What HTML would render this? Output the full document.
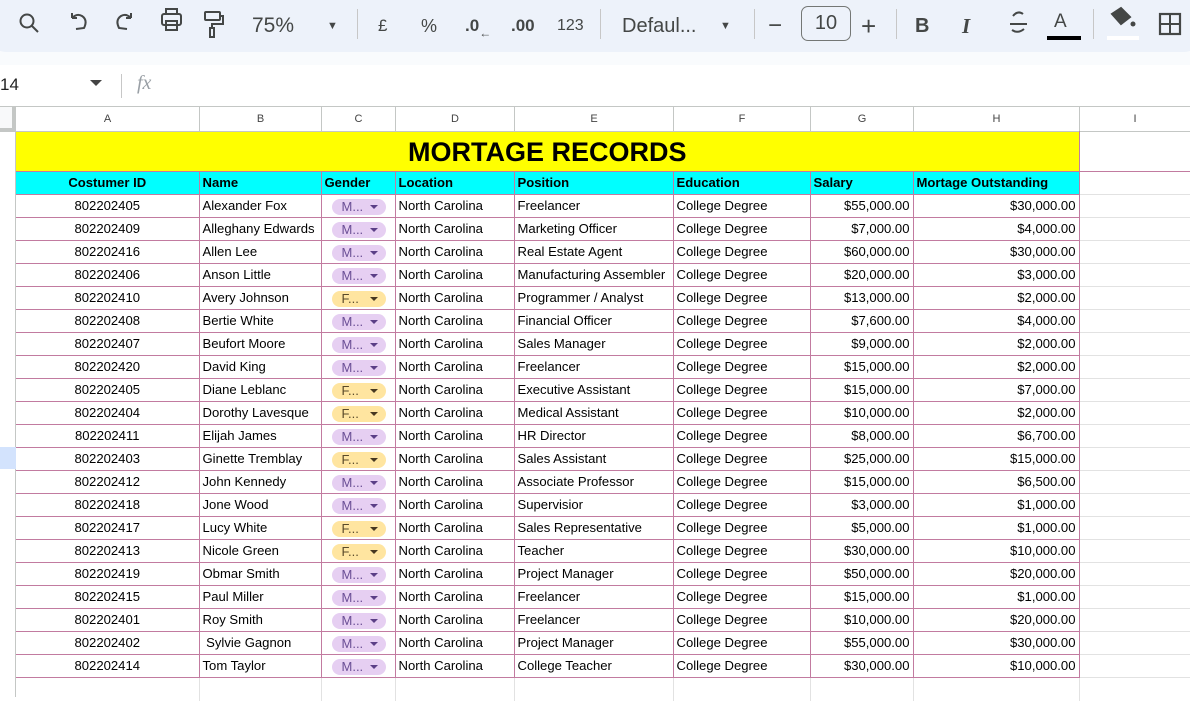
<!DOCTYPE html>
<html><head><meta charset="utf-8">
<style>
*{margin:0;padding:0;box-sizing:border-box}
body{width:1190px;height:697px;overflow:hidden;background:#fff;font-family:"Liberation Sans",Arial,sans-serif;position:relative}
.tb{position:absolute;left:-20px;top:0;width:1230px;height:52px;background:#edf2fa;border-radius:0 0 26px 26px}
.band{position:absolute;left:0;top:52px;width:1190px;height:13px;background:#f9fbfd}
.ic{position:absolute;top:0;height:52px;display:flex;align-items:center;color:#444746;font-size:19px}
.sep{position:absolute;top:9px;width:1px;height:30px;background:#c7c7c7}
.fb{position:absolute;top:65px;left:0;width:1190px;height:41px;background:#fff}
.ch{position:absolute;top:106px;height:26px;border-right:1px solid #c4c7c5;border-bottom:1px solid #c4c7c5;border-top:1px solid #c4c7c5;font-size:11px;color:#444;text-align:center;line-height:24px}
table{position:absolute;left:16px;top:131px;border-collapse:collapse;table-layout:fixed;width:1174px}
td{height:23px;font-size:13.1px;color:#000;padding:0 3px;white-space:nowrap;overflow:hidden;border-bottom:1px solid #c27ba0;border-right:1px solid #c27ba0;line-height:22px}
td.a{text-align:center;border-left:none}
td.r{text-align:right;padding-right:3px}
td.i{border-right:none;border-bottom:1px solid #e2e2e2}
tr.t td{height:40px;background:#ff0;font-size:27px;font-weight:bold;text-align:center;border-bottom:1px solid #c27ba0;border-top:1px solid #c4c7c5;line-height:30px}
tr.h td{background:#0ff;font-weight:bold;border-top:1px solid #c27ba0}
tr.e td{border-bottom:none;border-right:1px solid #e2e2e2}
.chip{display:inline-block;width:54px;height:16px;border-radius:8px;background:#e6cff2;color:#6a4e95;font-size:13px;line-height:16px;padding-left:10px;position:relative;vertical-align:middle;margin-left:7px}
.chip.f{background:#ffe5a0;color:#5a4a2a}
.chip:after{content:"";position:absolute;right:8px;top:6px;border-left:4px solid transparent;border-right:4px solid transparent;border-top:4px solid #5b3f86}
.chip.f:after{border-top-color:#473821}
</style></head><body>
<div class="tb"></div>
<div class="band"></div>
<svg style="position:absolute;left:0;top:0" width="1190" height="52" fill="none" stroke="#444746" stroke-width="2">
<circle cx="27" cy="21" r="6.5"/><line x1="32" y1="26" x2="38" y2="32"/>
<path d="M72 18 L72 13 M72 18 L77 18 M72 18 Q77 13 82 16 Q88 20 84 28 L76 29"/>
<path d="M131 18 L131 13 M131 18 L126 18 M131 18 Q126 13 121 16 Q115 20 119 28 L127 29"/>
<rect x="162" y="14" width="19" height="11" rx="2"/><rect x="166" y="9" width="11" height="5"/><rect x="166" y="21" width="11" height="9"/>
<rect x="205" y="12" width="15" height="8" rx="1"/><path d="M220 16 H223 V24 H212 V28"/><rect x="210" y="28" width="4" height="9"/>
<path d="M1010 24 H1027" stroke-width="2"/><path d="M1013 16 Q1018 10 1023 14 M1012 30 Q1018 34 1024 29"/>
<path d="M1047 38 H1081" stroke="#000" stroke-width="4"/>
<path d="M1107 38 H1139" stroke="#fff" stroke-width="4"/>
<path d="M1112 14 L1121 8 L1130 17 L1121 24 Z" fill="#444746"/><circle cx="1133" cy="24" r="2.5" fill="#444746" stroke="none"/>
<rect x="1160" y="14" width="20" height="20" stroke-width="2.2"/><line x1="1170" y1="14" x2="1170" y2="34"/><line x1="1160" y1="24" x2="1180" y2="24"/>
</svg>
<div class="ic" style="left:252px;font-size:21px">75%</div>
<div class="ic" style="left:327px;font-size:11px">▼</div>
<div class="sep" style="left:357px"></div>
<div class="ic" style="left:378px;font-size:17px">£</div>
<div class="ic" style="left:421px;font-size:18px">%</div>
<div class="ic" style="left:465px;font-size:17px;font-weight:bold">.0<span style="font-size:12px;margin-top:14px">←</span></div>
<div class="ic" style="left:511px;font-size:17px;font-weight:bold">.00</div>
<div class="ic" style="left:557px;font-size:16px">123</div>
<div class="sep" style="left:600px"></div>
<div class="ic" style="left:622px;font-size:20px">Defaul...</div>
<div class="ic" style="left:720px;font-size:11px">▼</div>
<div class="sep" style="left:754px"></div>
<div class="ic" style="left:768px;font-size:24px">−</div>
<div style="position:absolute;left:801px;top:6px;width:50px;height:35px;border:1px solid #747775;border-radius:7px;text-align:center;line-height:33px;font-size:20px;color:#444746">10</div>
<div class="ic" style="left:861px;font-size:26px">+</div>
<div class="sep" style="left:896px"></div>
<div class="ic" style="left:915px;font-size:20px;font-weight:bold">B</div>
<div class="ic" style="left:962px;font-size:21px;font-style:italic;font-weight:bold;font-family:'Liberation Serif',serif">I</div>
<div class="ic" style="left:1054px;font-size:19px;top:-4px">A</div>
<div class="sep" style="left:1093px"></div>
<div class="fb"></div>
<div style="position:absolute;left:0;top:75px;font-size:17px;color:#222">14</div>
<div style="position:absolute;left:90px;top:80px;border-left:6px solid transparent;border-right:6px solid transparent;border-top:6px solid #444"></div>
<div style="position:absolute;left:121px;top:74px;width:1px;height:24px;background:#c7c7c7"></div>
<div style="position:absolute;left:137px;top:72px;font-size:20px;color:#9aa0a6;font-style:italic;font-family:'Liberation Serif',serif">fx</div>
<div style="position:absolute;left:0;top:106px;width:16px;height:26px;background:#f8f9fa;border-right:4px solid #c4c7c5;border-bottom:4px solid #c4c7c5;border-top:1px solid #c4c7c5"></div>
<div class="ch" style="left:16px;width:184px">A</div>
<div class="ch" style="left:200px;width:122px">B</div>
<div class="ch" style="left:322px;width:74px">C</div>
<div class="ch" style="left:396px;width:119px">D</div>
<div class="ch" style="left:515px;width:159px">E</div>
<div class="ch" style="left:674px;width:137px">F</div>
<div class="ch" style="left:811px;width:103px">G</div>
<div class="ch" style="left:914px;width:166px">H</div>
<div class="ch" style="left:1080px;width:111px">I</div>
<div style="position:absolute;left:0;top:132px;width:16px;height:565px;border-right:1px solid #c4c7c5"></div>
<div style="position:absolute;left:0;top:447px;width:16px;height:22px;background:#d3e3fd"></div>
<table>
<colgroup><col style="width:183px"><col style="width:122px"><col style="width:74px"><col style="width:119px"><col style="width:159px"><col style="width:137px"><col style="width:103px"><col style="width:166px"><col style="width:111px"></colgroup>
<tr class="t"><td colspan="8">MORTAGE RECORDS</td><td class="i" style="background:#fff;border-top:none"></td></tr>
<tr class="h"><td class="a">Costumer ID</td><td>Name</td><td>Gender</td><td>Location</td><td>Position</td><td>Education</td><td>Salary</td><td>Mortage Outstanding</td><td class="i" style="background:#fff;border-top:none"></td></tr>
<tr><td class="a">802202405</td><td>Alexander Fox</td><td><span class="chip">M...</span></td><td>North Carolina</td><td>Freelancer</td><td>College Degree</td><td class="r">$55,000.00</td><td class="r">$30,000.00</td><td class="i"></td></tr>
<tr><td class="a">802202409</td><td>Alleghany Edwards</td><td><span class="chip">M...</span></td><td>North Carolina</td><td>Marketing Officer</td><td>College Degree</td><td class="r">$7,000.00</td><td class="r">$4,000.00</td><td class="i"></td></tr>
<tr><td class="a">802202416</td><td>Allen Lee</td><td><span class="chip">M...</span></td><td>North Carolina</td><td>Real Estate Agent</td><td>College Degree</td><td class="r">$60,000.00</td><td class="r">$30,000.00</td><td class="i"></td></tr>
<tr><td class="a">802202406</td><td>Anson Little</td><td><span class="chip">M...</span></td><td>North Carolina</td><td>Manufacturing Assembler</td><td>College Degree</td><td class="r">$20,000.00</td><td class="r">$3,000.00</td><td class="i"></td></tr>
<tr><td class="a">802202410</td><td>Avery Johnson</td><td><span class="chip f">F...</span></td><td>North Carolina</td><td>Programmer / Analyst</td><td>College Degree</td><td class="r">$13,000.00</td><td class="r">$2,000.00</td><td class="i"></td></tr>
<tr><td class="a">802202408</td><td>Bertie White</td><td><span class="chip">M...</span></td><td>North Carolina</td><td>Financial Officer</td><td>College Degree</td><td class="r">$7,600.00</td><td class="r">$4,000.00</td><td class="i"></td></tr>
<tr><td class="a">802202407</td><td>Beufort Moore</td><td><span class="chip">M...</span></td><td>North Carolina</td><td>Sales Manager</td><td>College Degree</td><td class="r">$9,000.00</td><td class="r">$2,000.00</td><td class="i"></td></tr>
<tr><td class="a">802202420</td><td>David King</td><td><span class="chip">M...</span></td><td>North Carolina</td><td>Freelancer</td><td>College Degree</td><td class="r">$15,000.00</td><td class="r">$2,000.00</td><td class="i"></td></tr>
<tr><td class="a">802202405</td><td>Diane Leblanc</td><td><span class="chip f">F...</span></td><td>North Carolina</td><td>Executive Assistant</td><td>College Degree</td><td class="r">$15,000.00</td><td class="r">$7,000.00</td><td class="i"></td></tr>
<tr><td class="a">802202404</td><td>Dorothy Lavesque</td><td><span class="chip f">F...</span></td><td>North Carolina</td><td>Medical Assistant</td><td>College Degree</td><td class="r">$10,000.00</td><td class="r">$2,000.00</td><td class="i"></td></tr>
<tr><td class="a">802202411</td><td>Elijah James</td><td><span class="chip">M...</span></td><td>North Carolina</td><td>HR Director</td><td>College Degree</td><td class="r">$8,000.00</td><td class="r">$6,700.00</td><td class="i"></td></tr>
<tr><td class="a">802202403</td><td>Ginette Tremblay</td><td><span class="chip f">F...</span></td><td>North Carolina</td><td>Sales Assistant</td><td>College Degree</td><td class="r">$25,000.00</td><td class="r">$15,000.00</td><td class="i"></td></tr>
<tr><td class="a">802202412</td><td>John Kennedy</td><td><span class="chip">M...</span></td><td>North Carolina</td><td>Associate Professor</td><td>College Degree</td><td class="r">$15,000.00</td><td class="r">$6,500.00</td><td class="i"></td></tr>
<tr><td class="a">802202418</td><td>Jone Wood</td><td><span class="chip">M...</span></td><td>North Carolina</td><td>Supervisior</td><td>College Degree</td><td class="r">$3,000.00</td><td class="r">$1,000.00</td><td class="i"></td></tr>
<tr><td class="a">802202417</td><td>Lucy White</td><td><span class="chip f">F...</span></td><td>North Carolina</td><td>Sales Representative</td><td>College Degree</td><td class="r">$5,000.00</td><td class="r">$1,000.00</td><td class="i"></td></tr>
<tr><td class="a">802202413</td><td>Nicole Green</td><td><span class="chip f">F...</span></td><td>North Carolina</td><td>Teacher</td><td>College Degree</td><td class="r">$30,000.00</td><td class="r">$10,000.00</td><td class="i"></td></tr>
<tr><td class="a">802202419</td><td>Obmar Smith</td><td><span class="chip">M...</span></td><td>North Carolina</td><td>Project Manager</td><td>College Degree</td><td class="r">$50,000.00</td><td class="r">$20,000.00</td><td class="i"></td></tr>
<tr><td class="a">802202415</td><td>Paul Miller</td><td><span class="chip">M...</span></td><td>North Carolina</td><td>Freelancer</td><td>College Degree</td><td class="r">$15,000.00</td><td class="r">$1,000.00</td><td class="i"></td></tr>
<tr><td class="a">802202401</td><td>Roy Smith</td><td><span class="chip">M...</span></td><td>North Carolina</td><td>Freelancer</td><td>College Degree</td><td class="r">$10,000.00</td><td class="r">$20,000.00</td><td class="i"></td></tr>
<tr><td class="a">802202402</td><td>&nbsp;Sylvie Gagnon</td><td><span class="chip">M...</span></td><td>North Carolina</td><td>Project Manager</td><td>College Degree</td><td class="r">$55,000.00</td><td class="r">$30,000.00</td><td class="i"></td></tr>
<tr><td class="a">802202414</td><td>Tom Taylor</td><td><span class="chip">M...</span></td><td>North Carolina</td><td>College Teacher</td><td>College Degree</td><td class="r">$30,000.00</td><td class="r">$10,000.00</td><td class="i"></td></tr>
<tr class="e"><td></td><td></td><td></td><td></td><td></td><td></td><td></td><td></td><td style="border-right:none"></td></tr>
</table>
</body></html>
